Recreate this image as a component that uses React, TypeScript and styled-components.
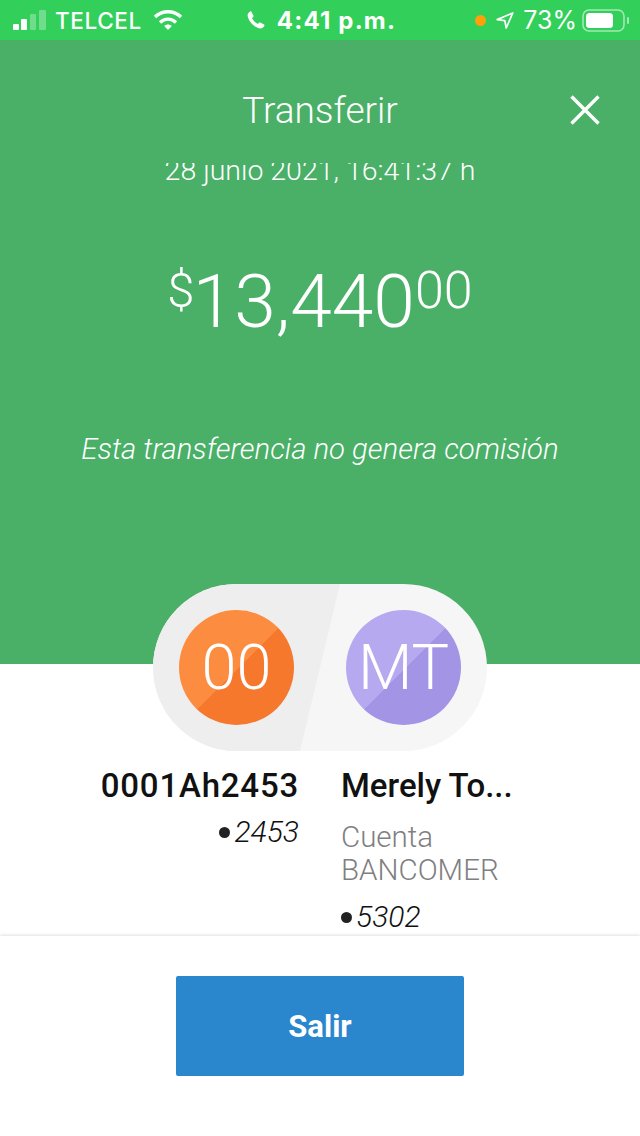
import styled, { createGlobalStyle } from "styled-components";

const GlobalStyle = createGlobalStyle`
    html, body {
        margin: 0;
        padding: 0;
        background: #ffffff;
    }

    body {
        font-family: Roboto, "Liberation Sans", sans-serif;
    }
`

const Page = styled.div`
    width: 640px;
    height: 1136px;
    display: flex;
    flex-direction: column;
    overflow: hidden;
`

const StatusBar = styled.div`
    height: 40px;
    flex: none;
    display: flex;
    align-items: center;
    padding-left: 13px;
    background-color: #32cf5a;
    color: #ffffff;
    font-family: Inter, Roboto, sans-serif;
`

const StatusGroup = styled.div<{ $gap: number; $left?: number }>`
    display: flex;
    align-items: center;
    gap: ${(props) => props.$gap}px;
    margin-left: ${(props) => props.$left ?? 0}px;
`

const Carrier = styled.span`
    font-size: 22.5px;
    font-weight: 500;
    letter-spacing: 0.6px;
    margin-right: 2px;
`

const Clock = styled.span`
    font-size: 24px;
    font-weight: 700;
    letter-spacing: 1.2px;
`

const Battery = styled.span`
    font-size: 25px;
    font-weight: 400;
    margin: 0 -5px 0 -1px;
`

const Dot = styled.span`
    width: 11px;
    height: 11px;
    border-radius: 50%;
    background-color: #ff9f0a;
`

const Scroll = styled.main`
    flex: 1;
    min-height: 0;
    overflow: hidden;
`

const Hero = styled.section`
    height: 624px;
    background-color: #4aaf67;
    color: #ffffff;
    display: flex;
    flex-direction: column;
    align-items: center;
`

const Header = styled.header`
    width: 100%;
    height: 123px;
    flex: none;
    box-sizing: border-box;
    padding: 17px 40px 0;
    display: grid;
    grid-template-columns: 1fr auto 1fr;
    align-items: center;
`

const Title = styled.h1`
    grid-column: 2;
    margin: 0;
    font-size: 37px;
    font-weight: 300;
`

const Close = styled.button`
    grid-column: 3;
    justify-self: end;
    width: 30px;
    height: 30px;
    padding: 0;
    border: 0;
    background: none;
    color: #ffffff;
    display: flex;
`

const DateClip = styled.div`
    height: 25px;
    overflow: hidden;
    flex: none;
`

const DateLine = styled.div`
    margin-top: -8px;
    font-size: 28.5px;
    line-height: 32px;
    font-weight: 300;
`

const Amount = styled.div`
    margin-top: 68px;
    display: flex;
    align-items: flex-start;
    font-weight: 300;
`

const AmountSmall = styled.span<{ $size: number }>`
    font-size: ${(props) => props.$size}px;
    line-height: 70px;
`

const AmountMain = styled.span`
    font-size: 75px;
    line-height: 90px;
    margin: 0 0 0 -2px;
`

const Note = styled.p`
    margin: 86px 0 0;
    font-size: 29.3px;
    line-height: 34px;
    font-weight: 300;
    font-style: italic;
`

const Pill = styled.div`
    position: relative;
    width: 334px;
    height: 167px;
    margin: -80px auto 0;
    border-radius: 84px;
    overflow: hidden;
    background-color: #f6f6f6;
    display: flex;
    align-items: center;
    justify-content: space-between;
    box-sizing: border-box;
    padding: 0 26px;

    &::before {
        content: "";
        position: absolute;
        inset: 0;
        background-color: #eeeeee;
        clip-path: polygon(0 0, 187px 0, 147px 100%, 0 100%);
    }
`

const Avatar = styled.div<{ $light: string; $dark: string }>`
    position: relative;
    width: 115px;
    height: 115px;
    border-radius: 50%;
    background: linear-gradient(135deg, ${(props) => props.$light} 51%, ${(props) => props.$dark} 51%);
    color: #ffffff;
    font-size: 63px;
    font-weight: 300;
    display: flex;
    align-items: center;
    justify-content: center;
`

const Parties = styled.div`
    display: grid;
    grid-template-columns: 1fr 1fr;
    column-gap: 42px;
    margin-top: 16px;
`

const Party = styled.div<{ $right?: boolean }>`
    display: flex;
    flex-direction: column;
    align-items: ${(props) => (props.$right ? "flex-end" : "flex-start")};
`

const Name = styled.div<{ $tracking?: number }>`
    font-size: 33px;
    line-height: 38px;
    font-weight: 500;
    letter-spacing: ${(props) => props.$tracking ?? 0}px;
    color: #111111;
`

const AccountType = styled.div`
    margin-top: 16px;
    font-size: 29.5px;
    line-height: 33px;
    font-weight: 300;
    color: #7f7f7f;
`

const Digits = styled.div<{ $top: number }>`
    margin-top: ${(props) => props.$top}px;
    display: flex;
    align-items: center;
    gap: 4px;
    font-size: 30px;
    line-height: 34px;
    font-weight: 300;
    font-style: italic;
    color: #111111;

    &::before {
        content: "";
        width: 11px;
        height: 11px;
        border-radius: 50%;
        background-color: #222222;
    }
`

const Footer = styled.footer`
    height: 200px;
    flex: none;
    box-sizing: border-box;
    padding-top: 40px;
    display: flex;
    justify-content: center;
    align-items: flex-start;
    background-color: #ffffff;
    box-shadow: 0 -1px 3px rgba(0, 0, 0, 0.12);
`

const ExitButton = styled.button`
    width: 288px;
    height: 100px;
    border: 0;
    border-radius: 2px;
    background-color: #2a86cd;
    color: #ffffff;
    font-family: inherit;
    font-size: 31px;
    font-weight: 700;
`

const SignalIcon = () => (
    <svg width="33" height="20" viewBox="0 0 33 20">
        <rect x="0" y="14" width="6" height="6" rx="1" fill="#fff" />
        <rect x="8" y="9" width="6" height="11" rx="1" fill="#fff" />
        <rect x="17" y="4" width="6" height="16" rx="1" fill="#fff" opacity="0.3" />
        <rect x="26" y="0" width="7" height="20" rx="1" fill="#fff" opacity="0.3" />
    </svg>
)

const WifiIcon = () => (
    <svg width="30" height="22" viewBox="0 0 30 22" fill="none" stroke="#fff" strokeWidth="3.4">
        <path d="M2 8 C9 1 21 1 28 8" />
        <path d="M7 13.5 C11.5 9 18.5 9 23 13.5" />
        <path d="M11.2 17 L15 21 L18.8 17 C16.5 15 13.5 15 11.2 17 Z" fill="#fff" stroke="none" />
    </svg>
)

const PhoneIcon = () => (
    <svg width="18" height="18" viewBox="0 0 18 18">
        <path
            d="M4.4 0.8 L6.4 4.6 C6.7 5.2 6.5 5.8 6 6.2 L5 7 C5.8 9.2 8.4 11.9 10.8 12.9 L11.7 11.9 C12.1 11.4 12.7 11.3 13.3 11.6 L17 13.6 C17.5 13.9 17.6 14.4 17.3 14.9 C16.4 16.5 15 17.5 13.5 17.4 C7.5 16.8 1.3 10.4 0.6 4.4 C0.5 2.9 1.5 1.4 3.2 0.5 C3.7 0.2 4.2 0.4 4.4 0.8 Z"
            fill="#fff"
        />
    </svg>
)

const LocationIcon = () => (
    <svg width="18" height="17" viewBox="0 0 18 17" fill="none" stroke="#fff" strokeWidth="1.7" strokeLinejoin="round">
        <path d="M16.8 1 L1.2 7.6 L8.8 8.6 L10.2 16 Z" />
    </svg>
)

const BatteryIcon = () => (
    <svg width="48" height="23" viewBox="0 0 48 23">
        <rect x="1" y="1" width="41" height="21" rx="6" fill="none" stroke="#fff" strokeOpacity="0.55" strokeWidth="1.6" />
        <rect x="4" y="4" width="27" height="15" rx="3.5" fill="#fff" />
        <rect x="45" y="8" width="2" height="7" rx="1" fill="#fff" fillOpacity="0.55" />
    </svg>
)

const CloseIcon = () => (
    <svg width="30" height="30" viewBox="0 0 30 30" fill="none" stroke="currentColor" strokeWidth="3.4">
        <path d="M1.5 1.5 L28.5 28.5 M28.5 1.5 L1.5 28.5" />
    </svg>
)

const App = () => {
    return (
        <Page>
            <GlobalStyle />
            <StatusBar>
                <StatusGroup $gap={9}>
                    <SignalIcon />
                    <Carrier>TELCEL</Carrier>
                    <WifiIcon />
                </StatusGroup>
                <StatusGroup $gap={12} $left={64}>
                    <PhoneIcon />
                    <Clock>4:41 p.m.</Clock>
                </StatusGroup>
                <StatusGroup $gap={10} $left={79}>
                    <Dot />
                    <LocationIcon />
                    <Battery>73%</Battery>
                    <BatteryIcon />
                </StatusGroup>
            </StatusBar>
            <Scroll>
                <Hero>
                    <Header>
                        <Title>Transferir</Title>
                        <Close aria-label="Cerrar">
                            <CloseIcon />
                        </Close>
                    </Header>
                    <DateClip>
                        <DateLine>28 junio 2021, 16:41:37 h</DateLine>
                    </DateClip>
                    <Amount>
                        <AmountSmall $size={49}>$</AmountSmall>
                        <AmountMain>13,440</AmountMain>
                        <AmountSmall $size={52}>00</AmountSmall>
                    </Amount>
                    <Note>Esta transferencia no genera comisión</Note>
                </Hero>
                <Pill>
                    <Avatar $light="#fb8c40" $dark="#f6782d">00</Avatar>
                    <Avatar $light="#b6a9ef" $dark="#a394e6">MT</Avatar>
                </Pill>
                <Parties>
                    <Party $right>
                        <Name $tracking={0.8}>0001Ah2453</Name>
                        <Digits $top={10}>2453</Digits>
                    </Party>
                    <Party>
                        <Name>Merely To...</Name>
                        <AccountType>Cuenta<br />BANCOMER</AccountType>
                        <Digits $top={13}>5302</Digits>
                    </Party>
                </Parties>
            </Scroll>
            <Footer>
                <ExitButton>Salir</ExitButton>
            </Footer>
        </Page>
    )
}

export default App;
